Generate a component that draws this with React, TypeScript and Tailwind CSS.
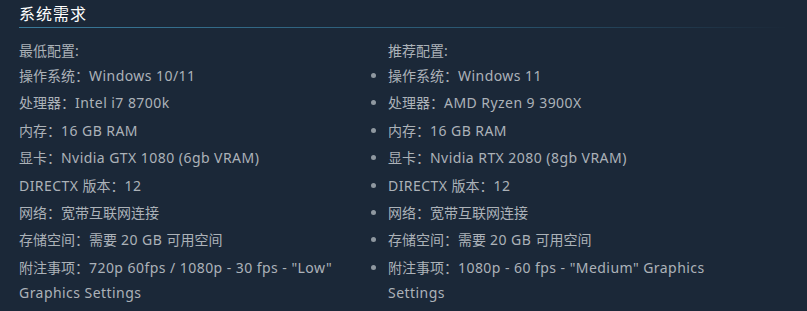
const MIN = [
  ['操作系统', 'Windows 10/11'],
  ['处理器', 'Intel i7 8700k'],
  ['内存', '16 GB RAM'],
  ['显卡', 'Nvidia GTX 1080 (6gb VRAM)'],
  ['DIRECTX 版本', '12'],
  ['网络', '宽带互联网连接'],
  ['存储空间', '需要 20 GB 可用空间'],
  ['附注事项', '720p 60fps / 1080p - 30 fps - "Low" Graphics Settings'],
]

const REC = [
  ['操作系统', 'Windows 11'],
  ['处理器', 'AMD Ryzen 9 3900X'],
  ['内存', '16 GB RAM'],
  ['显卡', 'Nvidia RTX 2080 (8gb VRAM)'],
  ['DIRECTX 版本', '12'],
  ['网络', '宽带互联网连接'],
  ['存储空间', '需要 20 GB 可用空间'],
  ['附注事项', '1080p - 60 fps - "Medium" Graphics Settings'],
]

// latin runs are set a touch wider than the CJK ones
function Txt({ s }: { s: string }) {
  return (
    <>
      {s.split(/([\x20-\x7E]+)/).map((part, i) =>
        /[\x21-\x7E]/.test(part) ? (
          <span key={i} className="tracking-[0.45px]">
            {part}
          </span>
        ) : (
          part
        ),
      )}
    </>
  )
}

function Column({ title, rows, bullets }: { title: string; rows: string[][]; bullets?: boolean }) {
  return (
    <div className="w-[354px]">
      <div className="leading-[25px]">{title}</div>
      <ul className={bullets ? 'list-disc pl-0 marker:text-[#8f98a0]' : 'list-none'}>
        {rows.map(([label, value]) => (
          <li key={label} className="mb-[2.4px] leading-[25px]">
            <Txt s={label} />：<Txt s={value} />
          </li>
        ))}
      </ul>
    </div>
  )
}

export default function App() {
  return (
    <div
      className="h-[311px] w-[807px] overflow-hidden bg-[#1b2838] px-[19px] text-[14px] text-[#acb2b8]"
      style={{ fontFamily: '"Noto Sans", "Noto Sans CJK SC", sans-serif' }}
    >
      <h2 className="pt-[1px] text-[16px] leading-[26px] tracking-[1px] text-white">系统需求</h2>
      <div className="h-px w-full bg-gradient-to-r from-[#3a7a9a] via-[#2a5670] via-60% to-transparent" />
      <div className="mt-[10px] flex">
        <Column title="最低配置:" rows={MIN} />
        <div className="ml-[15px]">
          <Column title="推荐配置:" rows={REC} bullets />
        </div>
      </div>
    </div>
  )
}
